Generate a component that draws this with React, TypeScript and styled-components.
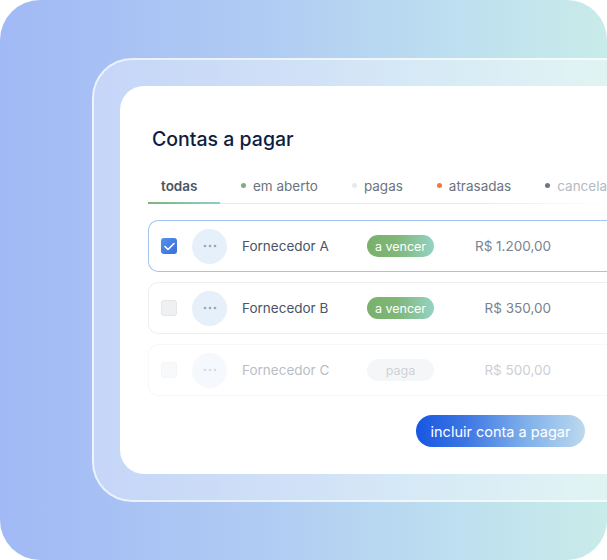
import React from 'react'
import styled, { createGlobalStyle } from 'styled-components'

const GlobalStyle = createGlobalStyle`
    html, body {
        margin: 0;
        padding: 0;
        background: #ffffff;
        overflow: hidden;
    }
    * {
        box-sizing: border-box;
    }
`

const Backdrop = styled.div`
    width: 607px;
    height: 560px;
    border-radius: 40px;
    background: linear-gradient(90deg, #a1b9f5 0%, #b1ccf3 45%, #bddff0 75%, #c9ebe9 100%);
    padding: 58px 0 0 92px;
    overflow: hidden;
    font-family: Inter, 'Noto Sans', sans-serif;
`

const Frame = styled.div`
    width: 560px;
    height: 444px;
    border-radius: 40px 0 0 40px;
    border: 2px solid rgba(255, 255, 255, 0.65);
    border-right: none;
    background: linear-gradient(90deg, rgba(255, 255, 255, 0.35), rgba(255, 255, 255, 0.45));
    padding: 26px 0 0 26px;
`

const Card = styled.div`
    width: 100%;
    height: 388px;
    border-radius: 24px 0 0 24px;
    background: #ffffff;
    padding: 41px 0 0 28px;
`

const Content = styled.div`
    width: 437px;
    display: flex;
    flex-direction: column;
`

const Title = styled.h1`
    margin: 0 0 0 4px;
    font-family: Inter, 'Noto Sans', sans-serif;
    font-size: 19.5px;
    line-height: 25px;
    font-weight: 500;
    color: #0e1c3f;
`

const TabBar = styled.div`
    display: flex;
    gap: 8px;
    margin-top: 21px;
    width: 460px;
    border-bottom: 1px solid;
    border-image: linear-gradient(90deg, #e6e8eb 70%, rgba(230, 232, 235, 0)) 1;
`

const Tab = styled.div<{ $active?: boolean; $faded?: boolean }>`
    display: flex;
    align-items: center;
    gap: 7px;
    height: 31px;
    min-width: ${p => (p.$active ? '72px' : 'auto')};
    padding: 0 13px 4px;
    margin-bottom: -1px;
    font-size: 13.5px;
    white-space: nowrap;
    font-weight: ${p => (p.$active ? 600 : 400)};
    color: ${p => (p.$active ? '#4b5563' : p.$faded ? '#b3bac3' : '#6b7480')};
    border-bottom: 2px solid transparent;
    border-image: ${p => (p.$active ? 'linear-gradient(90deg, #7fb476, #8ccfca) 1' : 'none')};
`

const Dot = styled.span<{ $color: string }>`
    width: 5px;
    height: 5px;
    border-radius: 50%;
    background: ${p => p.$color};
`

const Rows = styled.div`
    display: flex;
    flex-direction: column;
    gap: 10px;
    margin-top: 16px;
`

const Row = styled.div<{ $selected?: boolean; $faded?: boolean }>`
    width: 480px;
    height: 52px;
    display: flex;
    align-items: center;
    padding-left: 12px;
    border-radius: 10px;
    border: ${p => (p.$selected ? '1.5px solid #a3c4f0' : '1px solid #eceef1')};
    border-right: none;
    opacity: ${p => (p.$faded ? 0.38 : 1)};
    background: #ffffff;
`

const Checkbox = styled.div<{ $checked?: boolean }>`
    width: 16px;
    height: 16px;
    border-radius: 3px;
    display: flex;
    align-items: center;
    justify-content: center;
    background: ${p => (p.$checked ? 'linear-gradient(135deg, #5590ea, #3b6fd9)' : '#eef0f2')};
    border: ${p => (p.$checked ? 'none' : '1px solid #e3e6ea')};
`

const Avatar = styled.div`
    width: 35px;
    height: 35px;
    border-radius: 50%;
    margin-left: 15px;
    background: #e6f0fa;
    display: flex;
    align-items: center;
    justify-content: center;
`

const Name = styled.div`
    width: 125px;
    margin-left: 15px;
    font-size: 13.5px;
    color: #4a5466;
`

const Pill = styled.div<{ $paid?: boolean }>`
    width: 67px;
    height: 22px;
    border-radius: 11px;
    display: flex;
    align-items: center;
    justify-content: center;
    font-size: 12.5px;
    color: ${p => (p.$paid ? '#7d8794' : '#ffffff')};
    background: ${p => (p.$paid ? '#e7eaed' : 'linear-gradient(90deg, #79b06b 0%, #80b778 45%, #93d3c4 100%)')};
`

const Amount = styled.div`
    width: 117px;
    text-align: right;
    font-size: 13.5px;
    color: #78838f;
`

const Footer = styled.div`
    display: flex;
    justify-content: flex-end;
    margin-top: 19px;
`

const AddButton = styled.button`
    width: 169px;
    height: 32px;
    border: none;
    border-radius: 16px;
    background: linear-gradient(90deg, #1657e2 0%, #3e77e3 30%, #7fb0ea 65%, #bcd9ee 100%);
    color: #ffffff;
    font-family: Inter, 'Noto Sans', sans-serif;
    font-size: 14.5px;
    padding: 0;
    cursor: pointer;
`

const Check = () => (
    <svg width="11" height="9" viewBox="0 0 11 9" fill="none">
        <path d="M1 4.5 L4 7.5 L10 1.5" stroke="#ffffff" strokeWidth="1.6" strokeLinecap="round" strokeLinejoin="round" />
    </svg>
)

const Dots = () => (
    <svg width="14" height="4" viewBox="0 0 14 4">
        <circle cx="2" cy="2" r="1.3" fill="#98a6b8" />
        <circle cx="7" cy="2" r="1.3" fill="#98a6b8" />
        <circle cx="12" cy="2" r="1.3" fill="#98a6b8" />
    </svg>
)

const bills = [
    { name: 'Fornecedor A', status: 'a vencer', amount: 'R$ 1.200,00', checked: true },
    { name: 'Fornecedor B', status: 'a vencer', amount: 'R$ 350,00', checked: false },
    { name: 'Fornecedor C', status: 'paga', amount: 'R$ 500,00', checked: false },
]

const App = () => {
    return (
        <>
            <GlobalStyle />
            <Backdrop>
                <Frame>
                    <Card>
                        <Content>
                            <Title>Contas a pagar</Title>
                            <TabBar>
                                <Tab $active>todas</Tab>
                                <Tab><Dot $color="#79b27a" />em aberto</Tab>
                                <Tab><Dot $color="#e7e9ec" />pagas</Tab>
                                <Tab><Dot $color="#f07a3a" />atrasadas</Tab>
                                <Tab $faded><Dot $color="#6e7686" />cancela</Tab>
                            </TabBar>
                            <Rows>
                                {bills.map(bill => (
                                    <Row key={bill.name} $selected={bill.checked} $faded={bill.status === 'paga'}>
                                        <Checkbox $checked={bill.checked}>{bill.checked && <Check />}</Checkbox>
                                        <Avatar><Dots /></Avatar>
                                        <Name>{bill.name}</Name>
                                        <Pill $paid={bill.status === 'paga'}>{bill.status}</Pill>
                                        <Amount>{bill.amount}</Amount>
                                    </Row>
                                ))}
                            </Rows>
                            <Footer>
                                <AddButton>incluir conta a pagar</AddButton>
                            </Footer>
                        </Content>
                    </Card>
                </Frame>
            </Backdrop>
        </>
    )
}

export default App
